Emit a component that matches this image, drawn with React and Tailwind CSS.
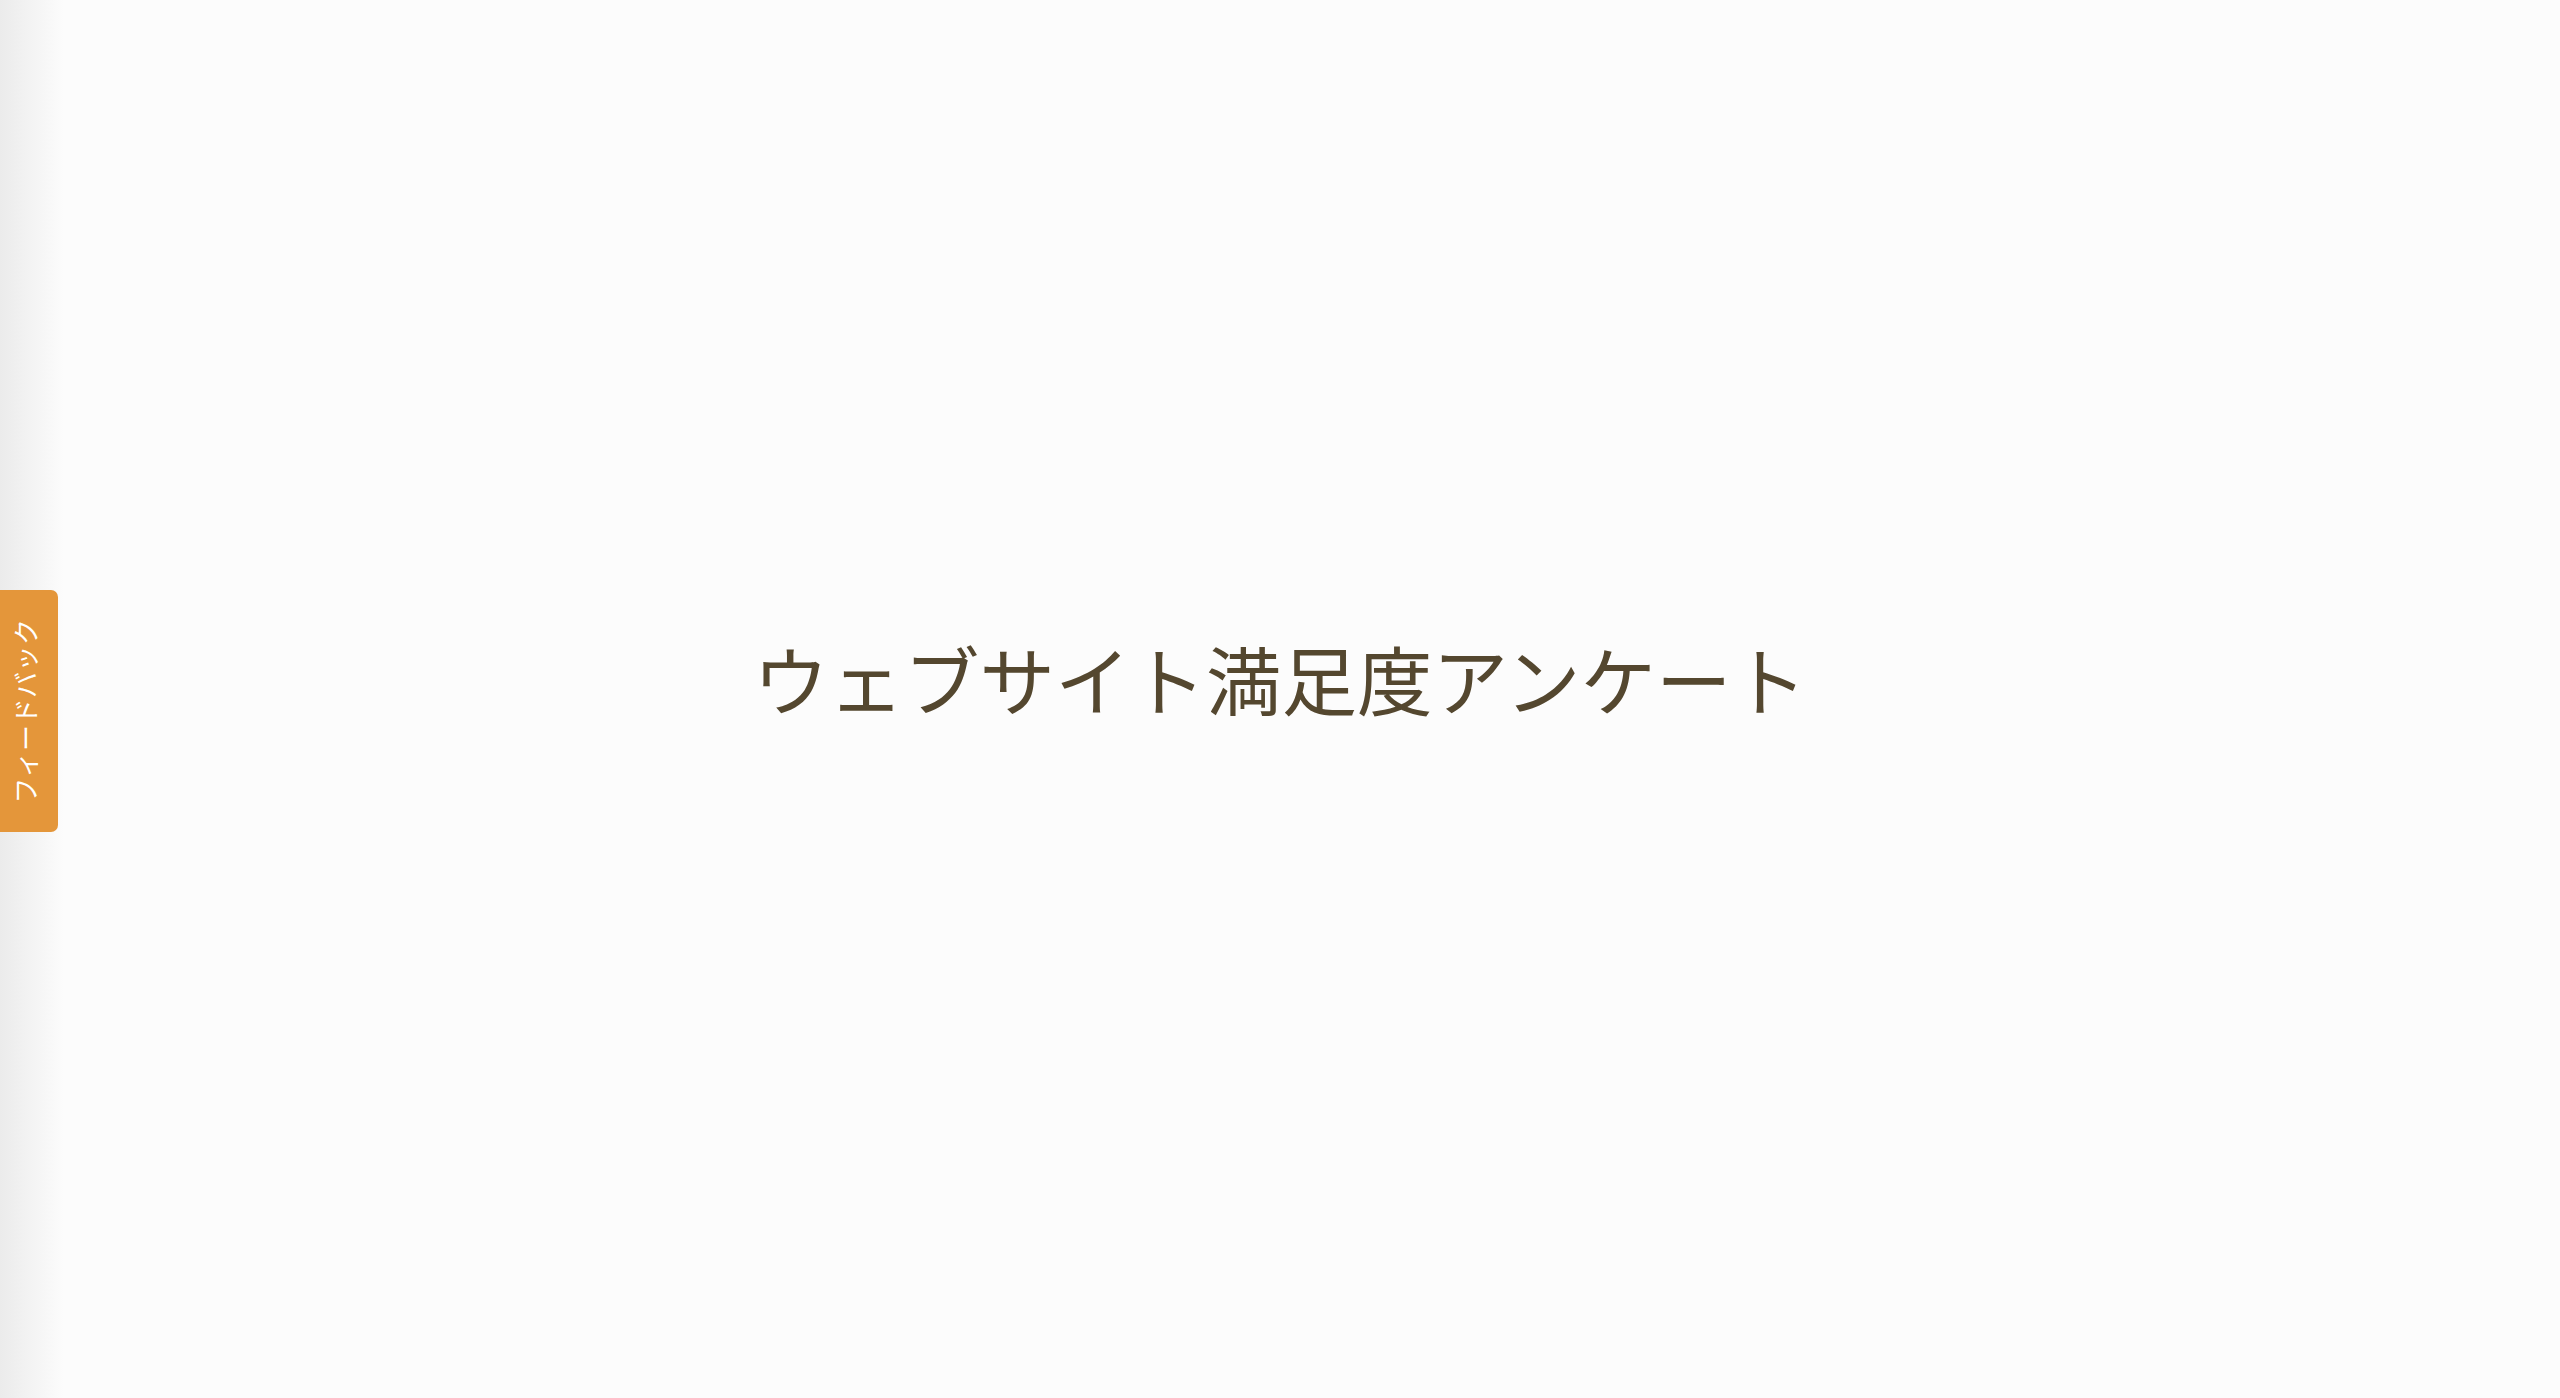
export default function App() {
  return (
    <div className="relative h-[1398px] w-full overflow-hidden bg-[#fcfcfc]" style={{ fontFamily: '"Noto Sans CJK JP", "Noto Sans", sans-serif' }}>
      {/* soft shade down the left edge */}
      <div className="pointer-events-none absolute inset-y-0 left-0 w-[64px] bg-gradient-to-r from-[#ebebeb] to-[#fcfcfc]/0" />

      <main className="flex h-full items-center justify-center pb-[42px]">
        <h1 className="text-[75.5px] font-normal leading-none text-[#54472f]">ウェブサイト満足度アンケート</h1>
      </main>

      {/* feedback tab */}
      <button className="fixed left-0 top-[590px] flex h-[242px] w-[58px] items-center justify-center rounded-r-[7px] bg-[#e4963a] pr-[8px]">
        <span className="-rotate-90 whitespace-nowrap text-[26px] leading-none tracking-[0.5px] text-white">フィードバック</span>
      </button>
    </div>
  )
}
